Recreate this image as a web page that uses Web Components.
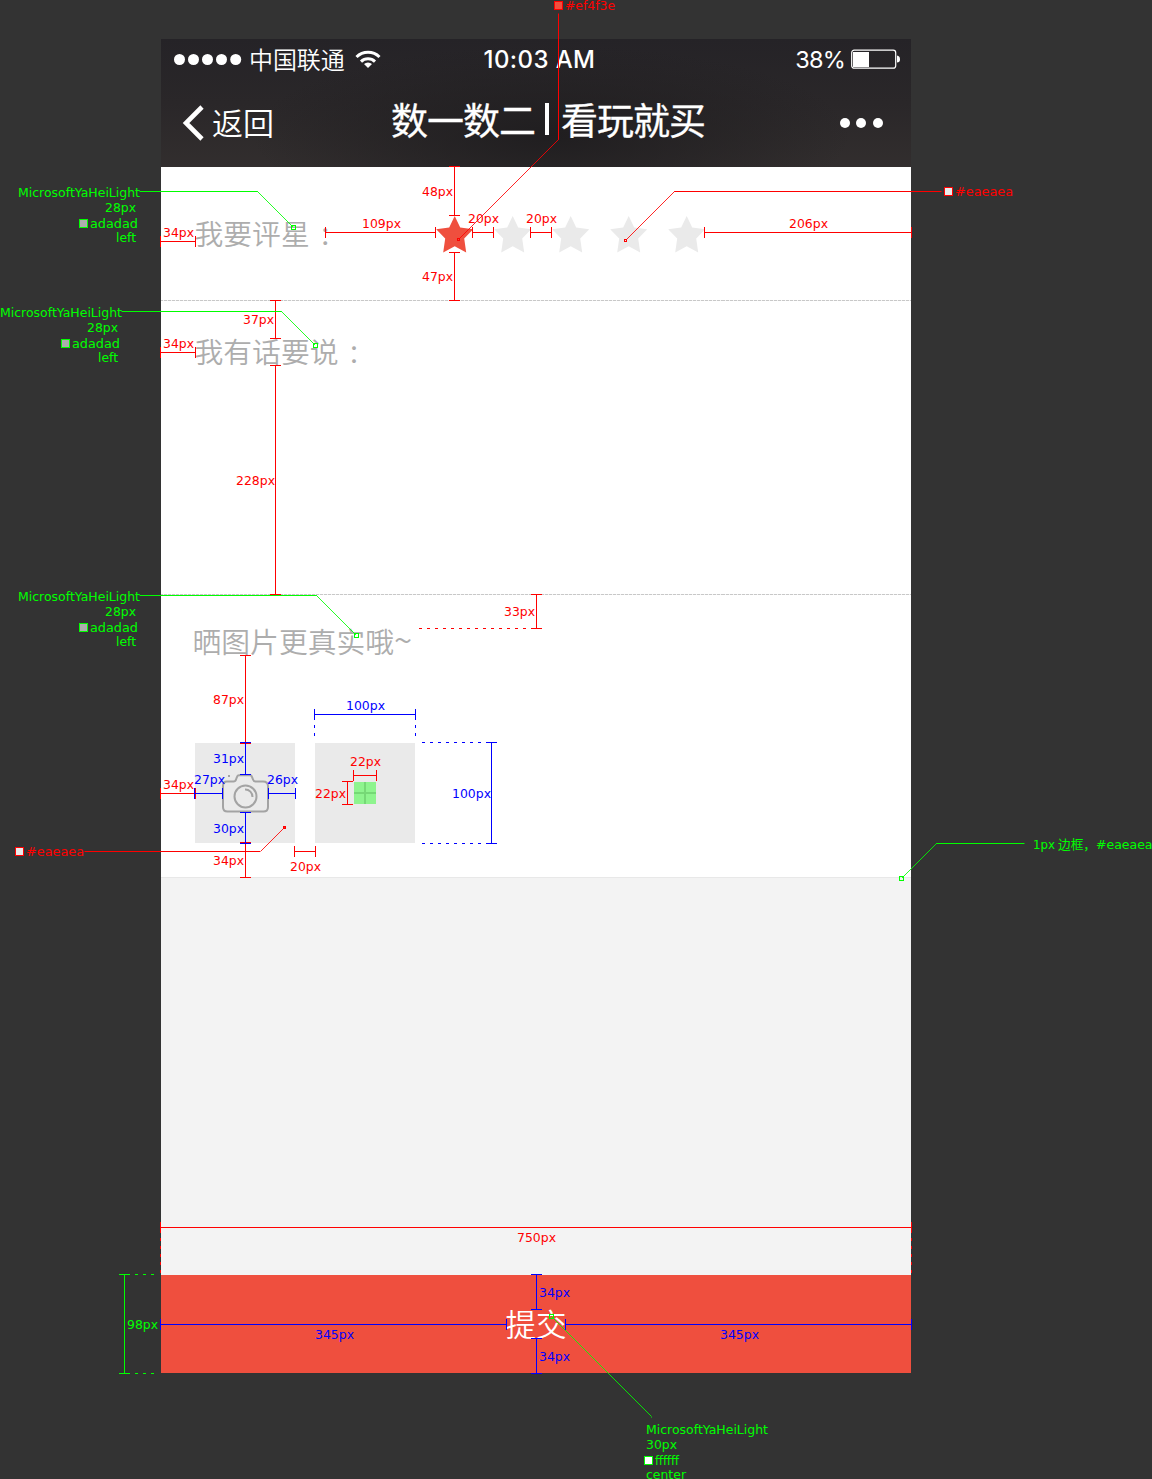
<!DOCTYPE html>
<html lang="zh-CN">
<head>
<meta charset="utf-8">
<title>评价页标注</title>
<style>
  html, body { margin: 0; background: #333; }
  body { width: 1152px; height: 1479px; overflow: hidden; font-family: "Noto Sans CJK SC", sans-serif; }
</style>
</head>
<body>
<spec-board>
  <phone-screen>
    <phone-header slot="header" carrier="中国联通" time="10:03 AM" battery="38%" back="返回"></phone-header>
    <form-row style="height:133px" dashed>
      <field-label style="--w:241px;--top:45px">我要评星<i>：</i></field-label>
      <star-rating value="1"></star-rating>
    </form-row>
    <form-row style="height:293px" dashed>
      <field-label style="--top:29px">我有话要说<i>：</i></field-label>
    </form-row>
    <form-row style="height:282px" column>
      <field-label style="--top:25px;--shift:-2px">晒图片更真实哦<b>~</b></field-label>
      <photo-tiles></photo-tiles>
    </form-row>
    <submit-bar slot="footer">提交</submit-bar>
  </phone-screen>

  <spec-layer slot="notes">
    <dim-line p="454 166 454 215" t="48px 422 192 31"></dim-line>
    <dim-line p="454 252 454 300" t="47px 422 277 31"></dim-line>
    <dim-line p="160 241 195 241" t="34px 163 233 31"></dim-line>
    <dim-line p="325 232 435 232" t="109px 362 224 39"></dim-line>
    <dim-line p="472 232 493 232" t="20px 468 219 31"></dim-line>
    <dim-line p="530 232 551 232" t="20px 526 219 31"></dim-line>
    <dim-line p="704 232 911 232" t="206px 789 224 39"></dim-line>
    <dim-line p="275 300 275 338" t="37px 243 320 31"></dim-line>
    <dim-line p="160 352 195 352" t="34px 163 344 31"></dim-line>
    <dim-line p="275 365 275 594" t="228px 236 481 39"></dim-line>
    <dim-line p="536 594 536 628" t="33px 504 612 31"></dim-line>
    <dash-line p="419 628 531 628"></dash-line>
    <dim-line p="245 655 245 743" t="87px 213 700 31"></dim-line>
    <dim-line p="245 842 245 877" t="34px 213 861 31"></dim-line>
    <dim-line p="160 793 195 793" t="34px 163 785 31"></dim-line>
    <dim-line p="294 851 315 851" t="20px 290 867 31"></dim-line>
    <dim-line p="353 775 376 775" t="22px 350 762 31"></dim-line>
    <dim-line p="347 781 347 804" t="22px 315 794 31"></dim-line>
    <dim-line tone="blue" p="245 742 245 774" t="31px 213 759 31"></dim-line>
    <dim-line tone="blue" p="245 812 245 843" t="30px 213 829 31"></dim-line>
    <dim-line tone="blue" p="194 793 222 793" t="27px 194 780 31"></dim-line>
    <dim-line tone="blue" p="268 793 295 793" t="26px 267 780 31"></dim-line>
    <dim-line tone="blue" p="314 714 415 714" t="100px 346 706 39"></dim-line>
    <dim-line tone="blue" p="491 742 491 843" t="100px 452 794 39"></dim-line>
    <dash-line tone="blue" p="314 725 314 737"></dash-line>
    <dash-line tone="blue" p="415 725 415 737"></dash-line>
    <dash-line tone="blue" p="422 742 486 742"></dash-line>
    <dash-line tone="blue" p="422 843 486 843"></dash-line>
    <dim-line p="160 1227 911 1227" t="750px 517 1238 39"></dim-line>
    <dash-line p="160 1238 160 1274"></dash-line>
    <dash-line p="911 1238 911 1274"></dash-line>
    <dim-line tone="blue" p="160 1324 506 1324" t="345px 315 1335 39"></dim-line>
    <dim-line tone="blue" p="565 1324 911 1324" t="345px 720 1335 39"></dim-line>
    <dim-line tone="blue" p="536 1274 536 1309" t="34px 539 1293 31"></dim-line>
    <dim-line tone="blue" p="536 1338 536 1373" t="34px 539 1357 31"></dim-line>
    <dim-line tone="lime" p="124 1274 124 1373" t="98px 127 1325 31"></dim-line>
    <dash-line tone="lime" p="127 1274 155 1274"></dash-line>
    <dash-line tone="lime" p="127 1373 155 1373"></dash-line>

    <call-out p="558 13 558 139 458 239" swatch="554 1 #ef4f3e" t="#ef4f3e 565 6 50"></call-out>
    <call-out p="941 191 674 191 625 240" swatch="944 187 #eaeaea" t="#eaeaea 955 192 58"></call-out>
    <call-out p="84 851 260 851 284 827" swatch="15 847 #eaeaea" t="#eaeaea 26 852 58"></call-out>
    <call-out tone="lime" p="139 191 257 191 293 227" swatch="79 219 #adadad" t="MicrosoftYaHeiLight 18 193 122|28px 105 208 31|adadad 90 224 48|left 116 238 20"></call-out>
    <call-out tone="lime" p="121 311 281 311 315 345" swatch="61 339 #adadad" t="MicrosoftYaHeiLight 0 313 122|28px 87 328 31|adadad 72 344 48|left 98 358 20"></call-out>
    <call-out tone="lime" p="139 595 316 595 356 635" swatch="79 623 #adadad" t="MicrosoftYaHeiLight 18 597 122|28px 105 612 31|adadad 90 628 48|left 116 642 20"></call-out>
    <call-out tone="lime" p="1024 843 936 843 901 878" t="1px 1033 845 22|边框， 1058 845 38|#eaeaea 1096 845 56.500"></call-out>
    <call-out tone="lime" p="651 1417 651 1416 551 1316" swatch="644 1456 #ffffff" t="MicrosoftYaHeiLight 646 1430 122|30px 646 1445 31|ffffff 655 1461 24|center 646 1475 40"></call-out>
  </spec-layer>
</spec-board>

<script>
const define = (name, html) => customElements.define(name, class extends HTMLElement {
  constructor() {
    super();
    this.attachShadow({ mode: 'open' });
  }
  connectedCallback() {
    this.shadowRoot.innerHTML = typeof html === 'function' ? html(this) : html;
  }
});

define('spec-board', `<style>
  :host { display: block; position: relative; width: 1152px; height: 1479px; background: #333; overflow: hidden; }
  main { display: flex; padding: 39px 0 0 161px; }
</style><main><slot></slot></main><slot name="notes"></slot>`);

define('phone-screen', `<style>
  :host { display: flex; flex-direction: column; width: 750px; height: 1334px; background: #f3f3f3; }
  section { background: #fff; border-bottom: 1px solid #e8e8e8; }
  .fill { flex: 1; }
</style><slot name="header"></slot><section><slot></slot></section><div class="fill"></div><slot name="footer"></slot>`);

define('phone-header', el => `<style>
  :host { display: flex; flex-direction: column; height: 128px; color: #fff;
    background: radial-gradient(ellipse 300px 90px at 52% 75%, #201e20 0, #201e2000 100%), linear-gradient(#252327, #2a2729 50%, #322e2e); }
  .row { display: grid; grid-template-columns: 1fr auto 1fr; align-items: center; white-space: nowrap; }
  .status { height: 40px; padding: 0 10px 0 13px; }
  .nav { height: 88px; padding: 0 28px 0 21px; }
  .l, .r { display: flex; align-items: center; }
  .r { justify-content: flex-end; }
  .carrier { font-size: 24px; line-height: 38px; padding-bottom: 1px; margin: 0 10px 0 7px; font-weight: 350; letter-spacing: -.1px; }
  .time { font: 500 24px/38px Inter, sans-serif; padding-top: 2px; letter-spacing: .4px; margin-left: 4px; }
  .pct { font: 400 23.5px/38px Inter, sans-serif; padding-top: 2px; margin-right: 6px; letter-spacing: -.8px; }
  .back { font-size: 31px; line-height: 60px; padding-bottom: 2px; margin-left: 8px; font-weight: 350; }
  h1 { display: flex; align-items: center; margin: 0 0 8px 31px; font-size: 37px; letter-spacing: -1px; line-height: 60px; font-weight: 400; -webkit-text-stroke: .3px #fff; }
  h1 b { width: 4px; height: 32px; background: #fff; margin: 0 12px 0 10px; }
  svg { display: block; flex: none; }
</style>
<div class="row status">
  <div class="l">
    <svg width="68" height="12"><g fill="#fff"><circle cx="5.5" cy="6.5" r="5.5"/><circle cx="19.5" cy="6.5" r="5.5"/><circle cx="33.5" cy="6.5" r="5.5"/><circle cx="47.5" cy="6.5" r="5.5"/><circle cx="61.7" cy="6.5" r="5.5"/></g></svg>
    <span class="carrier">${el.getAttribute('carrier')}</span>
    <svg width="26" height="20" fill="none" stroke="#fff" stroke-width="3"><path d="M1.5 8a16.5 16.5 0 0 1 23 0M6 12.6a10 10 0 0 1 14 0"/><path d="M13 19l-4-4a5.8 5.8 0 0 1 8 0z" fill="#fff" stroke="none"/></svg>
  </div>
  <span class="time">${el.getAttribute('time')}</span>
  <div class="r"><span class="pct">${el.getAttribute('battery')}</span>
    <svg width="50" height="20"><rect x=".7" y="1.2" width="44" height="18" rx="2.5" fill="none" stroke="#fff" stroke-width="1.2"/><path d="M2 3h16v15H2z" fill="#fff"/><path d="M46 6.5q3 .5 3 3.7T46 13.5z" fill="#fff"/></svg>
  </div>
</div>
<div class="row nav">
  <div class="l"><svg width="22" height="36"><path d="M20 2L4 18l16 16" fill="none" stroke="#fff" stroke-width="4.6"/></svg><span class="back">${el.getAttribute('back')}</span></div>
  <h1><span>数一数二</span><b></b><span>看玩就买</span></h1>
  <div class="r"><svg width="44" height="12" fill="#fff"><circle cx="6" cy="6" r="5"/><circle cx="22" cy="6" r="5"/><circle cx="39" cy="6" r="5"/></svg></div>
</div>`);

define('form-row', `<style>
  :host { display: flex; padding-left: 34px; }
  :host([column]) { flex-direction: column; }
  :host([dashed]) { border-bottom: 1px solid; border-image: repeating-linear-gradient(90deg, #c8c8c8 0 3px, #f4f4f4 3px 4px) 1; }
</style><slot></slot>`);

define('field-label', `<style>
  :host { display: block; box-sizing: border-box; width: var(--w, auto); height: calc(var(--top) + 45px); padding-top: var(--top); margin-left: calc(var(--shift, 0px) - .5px);
    color: #adadad; font-size: 28.8px; line-height: 42px; font-weight: 350; white-space: nowrap; }
  ::slotted(i) { font-style: normal; font-family: "Noto Sans CJK TC", sans-serif; font-size: 26px; margin-left: 9px; }
  ::slotted(b) { font-weight: 350; font-size: 33px; line-height: 30px; }
</style><slot></slot>`);

define('star-rating', el => {
  const n = +el.getAttribute('value');
  const star = i => `<svg width="38" height="37"><path transform="translate(.2)" fill="${i < n ? '#ef4f3e' : '#eaeaea'}" d="M18.5 0L24 11.5 37 13.3 28 22.6 30 36.5 18.5 30.3 7 36.5 9 22.6 0 13.3 13 11.5z"/></svg>`;
  return `<style>:host { display: flex; gap: 20px; padding-top: 49px; } svg { display: block; }</style>${[0, 1, 2, 3, 4].map(star).join('')}`;
});

define('photo-tiles', `<style>
  :host { display: flex; gap: 20px; padding-top: 78px; }
  div { display: flex; width: 100px; height: 100px; background: #eaeaea; box-sizing: border-box; }
  .cam { padding: 31px 0 0 26px; } .add { padding: 39px; }
</style>
<div class="cam"><svg width="50" height="40" fill="none" stroke="#a3a3a3" stroke-width="2">
  <path d="M6 7.5H12.5Q14.5 7.5 15 5.5L16.2 2.4Q16.6 1.2 18 1.2H29Q30.4 1.2 30.8 2.4L32 5.5Q32.6 7.5 34.5 7.5H42Q47 7.5 47 12V33Q47 37.5 42.5 37.5H6.5Q2 37.5 2 33V12Q2 7.5 6 7.5z"/>
  <circle cx="24.5" cy="22.5" r="11"/><path d="M24 15.5A7.2 7.2 0 0 1 31.5 23"/><path d="M7 2h2"/></svg></div>
<div class="add"><svg width="22" height="22"><path fill="#8ef48e" d="M0 0h22v22H0z"/><path stroke="#76d976" stroke-width="2" d="M11 0v22M0 11h22"/></svg></div>`);

define('submit-bar', `<style>
  :host { display: flex; box-sizing: border-box; height: 98px; padding-bottom: 3px; align-items: center; justify-content: center; background: #ef4f3e; color: #fff; font-size: 30.5px; line-height: 60px; font-weight: 350; }
</style><slot></slot>`);

define('spec-layer', `<style>:host { position: absolute; inset: 0; pointer-events: none; }</style><slot></slot>`);

const tones = { red: '#f00', blue: '#00f', lime: '#0f0' };
const tone = el => tones[el.getAttribute('tone') || 'red'];
const nums = el => el.getAttribute('p').split(' ').map(Number);
const sheet = `<style>
  :host { position: absolute; inset: 0; }
  svg { display: block; }
  text { font: 12.6px "DejaVu Sans", "Noto Sans CJK SC", sans-serif; }
</style>`;
const wrap = body => `${sheet}<svg width="1152" height="1479" fill="none">${body}</svg>`;
const labels = el => (el.getAttribute('t') || '').split('|').filter(Boolean).map(s => {
  const [str, x, y, w] = s.split(' ');
  return `<text x="${x}" y="${+y + 4}" textLength="${w}" lengthAdjust="spacingAndGlyphs" fill="${tone(el)}">${str}</text>`;
}).join('');

define('dim-line', el => {
  const [a, b, c, d] = nums(el).map(v => v + .5);
  const caps = a === c ? `M${a - 5.5} ${b}h11M${a - 5.5} ${d}h11` : `M${a} ${b - 5.5}v11M${c} ${b - 5.5}v11`;
  return wrap(`<path stroke="${tone(el)}" d="M${a} ${b}L${c} ${d}${caps}"/>${labels(el)}`);
});

define('dash-line', el => {
  const [a, b, c, d] = nums(el);
  const v = a === c;
  return wrap(`<path stroke="${tone(el)}" stroke-dasharray="3 5" d="M${v ? a + .5 : a} ${v ? b : b + .5}L${v ? c + .5 : c} ${v ? d : d + .5}"/>`);
});

define('call-out', el => {
  const [a, b, c, d, e, f] = nums(el).map(v => v + .5);
  const col = tone(el), r = col === '#0f0' ? 2 : 1;
  const sw = (el.getAttribute('swatch') || '').split(' ');
  const box = sw.length > 1 ? `<rect x="${+sw[0] + .5}" y="${+sw[1] + .5}" width="8" height="8" fill="${sw[2]}" stroke="${col}"/>` : '';
  return wrap(`<path stroke="${col}" d="M${a} ${b}L${c} ${d}"/><path stroke="${col}" stroke-opacity=".85" shape-rendering="crispEdges" d="M${c} ${d}L${e} ${f}"/>
    <rect x="${e - r}" y="${f - r}" width="${2 * r}" height="${2 * r}" stroke="${col}"/>${box}${labels(el)}`);
});
</script>
</body>
</html>
